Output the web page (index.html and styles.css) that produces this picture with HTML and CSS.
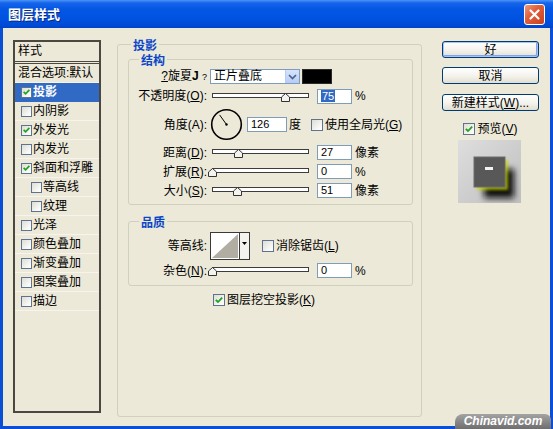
FILE: index.html
```html
<!DOCTYPE html>
<html lang="zh-CN">
<head>
<meta charset="utf-8">
<title>图层样式</title>
<link rel="stylesheet" href="styles.css">
</head>
<body>
<div class="window">
  <div class="titlebar">
    <span class="title">图层样式</span>
    <span class="close"><svg width="19" height="19" viewBox="0 0 19 19"><path d="M5.5 5.5 L13.5 13.5 M13.5 5.5 L5.5 13.5" stroke="#fff" stroke-width="2.2" stroke-linecap="round"/></svg></span>
  </div>
  <div class="client">
    <div class="stylelist">
      <div class="sl-head">样式</div>
      <div class="sl-item plain">混合选项:默认</div>
      <div class="sl-item selected"><span class="cb on"><svg width="10" height="10" viewBox="0 0 10 10"><path d="M1.8 4.8 L4 7 L8.2 2.6" fill="none" stroke="#21a121" stroke-width="1.8"/></svg></span>投影</div>
      <div class="sl-item"><span class="cb"></span>内阴影</div>
      <div class="sl-item"><span class="cb on"><svg width="10" height="10" viewBox="0 0 10 10"><path d="M1.8 4.8 L4 7 L8.2 2.6" fill="none" stroke="#21a121" stroke-width="1.8"/></svg></span>外发光</div>
      <div class="sl-item"><span class="cb"></span>内发光</div>
      <div class="sl-item"><span class="cb on"><svg width="10" height="10" viewBox="0 0 10 10"><path d="M1.8 4.8 L4 7 L8.2 2.6" fill="none" stroke="#21a121" stroke-width="1.8"/></svg></span>斜面和浮雕</div>
      <div class="sl-item sub"><span class="cb"></span>等高线</div>
      <div class="sl-item sub"><span class="cb"></span>纹理</div>
      <div class="sl-item"><span class="cb"></span>光泽</div>
      <div class="sl-item"><span class="cb"></span>颜色叠加</div>
      <div class="sl-item"><span class="cb"></span>渐变叠加</div>
      <div class="sl-item"><span class="cb"></span>图案叠加</div>
      <div class="sl-item"><span class="cb"></span>描边</div>
    </div>

    <fieldset class="group outer">
      <legend>投影</legend>
      <fieldset class="group inner struct">
        <legend>结构</legend>
        <div class="row r19">
          <span class="lbl"><u>?</u>旋夏<b>J</b> <small>?</small></span>
          <span class="select"><span class="sel-text">正片叠底</span><span class="sel-btn"><svg width="9" height="6" viewBox="0 0 9 6"><path d="M1 1 L4.5 4.5 L8 1" fill="none" stroke="#4d6185" stroke-width="1.6"/></svg></span></span>
          <span class="swatch"></span>
        </div>
        <div class="row r20">
          <span class="lbl">不透明度(<u>O</u>):</span>
          <svg class="slider" width="103" height="13" viewBox="0 0 103 13"><rect x="5.5" y="3.5" width="96" height="4" fill="#fff" stroke="#3c3c3c"/><polygon points="78.5,3.5 82.5,7 82.5,11.5 74.5,11.5 74.5,7" fill="#f4f3ee" stroke="#333"/></svg>
          <span class="field"><span class="hl">75</span></span>
          <span class="unit">%</span>
        </div>
        <div class="row angle">
          <span class="lbl">角度(A):</span>
          <svg class="dial" width="33" height="33" viewBox="0 0 33 33"><circle cx="16.5" cy="16.5" r="14.8" fill="none" stroke="#000" stroke-width="1.6"/><line x1="16.5" y1="16.5" x2="9.6" y2="6.9" stroke="#000" stroke-width="1"/><circle cx="16.5" cy="16.5" r="1.2" fill="#000"/></svg>
          <span class="field wide">126</span>
          <span class="unit deg">度</span>
          <span class="cb gl"></span>
          <span class="cblabel">使用全局光(<u>G</u>)</span>
        </div>
        <div class="row r19">
          <span class="lbl">距离(<u>D</u>):</span>
          <svg class="slider" width="103" height="13" viewBox="0 0 103 13"><rect x="5.5" y="3.5" width="96" height="4" fill="#fff" stroke="#3c3c3c"/><polygon points="31.5,3.5 35.5,7 35.5,11.5 27.5,11.5 27.5,7" fill="#f4f3ee" stroke="#333"/></svg>
          <span class="field">27</span>
          <span class="unit">像素</span>
        </div>
        <div class="row r19">
          <span class="lbl">扩展(<u>R</u>):</span>
          <svg class="slider" width="103" height="13" viewBox="0 0 103 13"><rect x="5.5" y="3.5" width="96" height="4" fill="#fff" stroke="#3c3c3c"/><polygon points="5.5,3.5 9.5,7 9.5,11.5 1.5,11.5 1.5,7" fill="#f4f3ee" stroke="#333"/></svg>
          <span class="field">0</span>
          <span class="unit">%</span>
        </div>
        <div class="row r19">
          <span class="lbl">大小(<u>S</u>):</span>
          <svg class="slider" width="103" height="13" viewBox="0 0 103 13"><rect x="5.5" y="3.5" width="96" height="4" fill="#fff" stroke="#3c3c3c"/><polygon points="30.5,3.5 34.5,7 34.5,11.5 26.5,11.5 26.5,7" fill="#f4f3ee" stroke="#333"/></svg>
          <span class="field">51</span>
          <span class="unit">像素</span>
        </div>
      </fieldset>

      <fieldset class="group inner quality">
        <legend>品质</legend>
        <div class="row contour-row">
          <span class="lbl">等高线:</span>
          <span class="contour">
            <svg class="curve" width="30" height="28" viewBox="0 0 30 28"><rect x="0.5" y="0.5" width="29" height="27" fill="#fff" stroke="#3a3a3a"/><polygon points="2,26 28,2 28,26" fill="#b2ada2"/></svg>
            <span class="contour-btn"><svg width="5" height="3" viewBox="0 0 5 3"><polygon points="0,0 5,0 2.5,3" fill="#000"/></svg></span>
          </span>
          <span class="cb aa"></span>
          <span class="cblabel">消除锯齿(<u>L</u>)</span>
        </div>
        <div class="row r19">
          <span class="lbl">杂色(<u>N</u>):</span>
          <svg class="slider" width="103" height="13" viewBox="0 0 103 13"><rect x="5.5" y="3.5" width="96" height="4" fill="#fff" stroke="#3c3c3c"/><polygon points="5.5,3.5 9.5,7 9.5,11.5 1.5,11.5 1.5,7" fill="#f4f3ee" stroke="#333"/></svg>
          <span class="field">0</span>
          <span class="unit">%</span>
        </div>
      </fieldset>

      <div class="row knockout">
        <span class="cb on"><svg width="10" height="10" viewBox="0 0 10 10"><path d="M1.8 4.8 L4 7 L8.2 2.6" fill="none" stroke="#21a121" stroke-width="1.8"/></svg></span>
        <span class="cblabel">图层挖空投影(<u>K</u>)</span>
      </div>
    </fieldset>

    <div class="actions">
      <div class="btn default">好</div>
      <div class="btn">取消</div>
      <div class="btn">新建样式(<u>W</u>)...</div>
      <div class="preview-check">
        <span class="cb on"><svg width="10" height="10" viewBox="0 0 10 10"><path d="M1.8 4.8 L4 7 L8.2 2.6" fill="none" stroke="#21a121" stroke-width="1.8"/></svg></span>
        <span class="cblabel">预览(<u>V</u>)</span>
      </div>
      <svg class="preview" width="63" height="63" viewBox="0 0 63 63">
        <defs>
          <linearGradient id="pbg" x1="0" y1="0" x2="1" y2="1">
            <stop offset="0" stop-color="#dedede"/>
            <stop offset="0.6" stop-color="#cbcbcb"/>
            <stop offset="1" stop-color="#c0c0c0"/>
          </linearGradient>
          <filter id="blur3" x="-50%" y="-50%" width="200%" height="200%"><feGaussianBlur stdDeviation="3"/></filter>
          <filter id="blur2" x="-50%" y="-50%" width="200%" height="200%"><feGaussianBlur stdDeviation="1.4"/></filter>
        </defs>
        <rect x="0" y="0" width="63" height="63" fill="url(#pbg)"/>
        <rect x="26" y="29" width="30" height="29" fill="#0e0e0e" filter="url(#blur3)"/>
        <rect x="19" y="20" width="31" height="30" fill="#c4d400" opacity="0.75" filter="url(#blur2)"/>
        <rect x="16" y="17" width="31" height="30" fill="#585858" stroke="#6c6c6c" stroke-width="1"/>
        <rect x="27" y="27" width="8" height="3" fill="#f2f2f2"/>
      </svg>
    </div>
  </div>
  <div class="watermark">Chinavid.com</div>
</div>
</body>
</html>
```

FILE: styles.css
```css
* { box-sizing: border-box; }
html, body { margin: 0; padding: 0; }
body {
  width: 553px;
  height: 429px;
  overflow: hidden;
  font-family: "Liberation Sans", "Noto Sans CJK SC", sans-serif;
  font-size: 12px;
  color: #000;
  background: #0a4fd6;
}
.window {
  position: relative;
  width: 553px;
  height: 429px;
  display: flex;
  flex-direction: column;
  background: #0a4fd6;
}

/* title bar */
.titlebar {
  flex: none;
  height: 28px;
  display: flex;
  align-items: center;
  justify-content: space-between;
  padding: 0 8px;
  background: linear-gradient(#4a94f8 0px, #1564ea 3px, #0457e4 9px, #0052e0 18px, #004bd6 25px, #0043c8 28px);
}
.title {
  color: #fff;
  font-family: "Noto Sans CJK SC", sans-serif;
  font-weight: bold;
  font-size: 13px;
  line-height: 16px;
  text-shadow: 1px 1px 0 #0a2a80;
}
.close {
  width: 21px;
  height: 21px;
  display: flex;
  align-items: center;
  justify-content: center;
  border: 1px solid #fff;
  border-radius: 3px;
  background: linear-gradient(135deg, #ee9a7c 0%, #e0603c 40%, #c9401f 100%);
}
.close svg { display: block; }

/* client area */
.client {
  flex: 1;
  margin: 0 3px 3px;
  display: flex;
  align-items: flex-start;
  background: #ece9d8;
}

/* style list */
.stylelist {
  flex: none;
  width: 88px;
  height: 373px;
  margin: 12px 0 0 10px;
  border: 2px solid #4a4840;
  display: flex;
  flex-direction: column;
}
.sl-head {
  height: 22px;
  padding-left: 3px;
  line-height: 19px;
  border-bottom: 3px double #4a4840;
}
.sl-item {
  height: 19px;
  display: flex;
  align-items: center;
  padding-left: 6px;
  line-height: 14px;
  border-bottom: 1px solid #f6f4ec;
  white-space: nowrap;
}
.sl-item.plain { padding-left: 3px; }
.sl-item.sub { padding-left: 16px; }
.sl-item.selected {
  background: #316ac5;
  color: #fff;
  font-weight: bold;
  border-bottom-color: #316ac5;
}
.sl-item .cb { width: 11px; height: 11px; margin-right: 1px; }

/* checkboxes */
.cb {
  flex: none;
  display: inline-flex;
  align-items: center;
  justify-content: center;
  width: 12px;
  height: 12px;
  border: 1px solid #5d7391;
  background: linear-gradient(135deg, #dddcd4, #f7f7f4 70%, #fff);
}
.cb svg { display: block; }
.cblabel { margin-left: 2px; white-space: nowrap; line-height: 14px; }

/* group boxes */
.group {
  margin: 0;
  min-width: 0;
  border: 1px solid #d0d0bf;
  border-radius: 3px;
}
.group legend {
  padding: 0 2px;
  font-size: 12px;
  line-height: 13px;
  color: #0b46c8;
  font-weight: bold;
  font-family: "Noto Sans CJK SC", sans-serif;
}
.outer {
  flex: none;
  width: 305px;
  height: 379px;
  margin: 10px 0 0 16px;
  padding: 0 8px 0 10px;
}
.outer > legend { margin-left: 3px; }
.inner {
  width: 100%;
  padding: 0;
}
.inner > legend { margin-left: 10px; }
.struct { margin-top: 2px; padding: 1px 0 4px 0; }
.quality { margin-top: 10px; padding: 2px 0 5px 0; }

/* rows */
.row {
  display: flex;
  align-items: center;
  white-space: nowrap;
  line-height: 14px;
}
.r19 { height: 19px; }
.r20 { height: 20px; }
.angle { height: 37px; }
.contour-row { height: 31px; }
.lbl {
  flex: none;
  width: 78px;
  text-align: right;
  white-space: nowrap;
}
.lbl small { font-size: 9px; }

.select {
  flex: none;
  width: 90px;
  height: 15px;
  margin-left: 3px;
  display: flex;
  border: 1px solid #7f9db9;
  background: #fff;
}
.sel-text {
  flex: 1;
  padding-left: 3px;
  font-size: 12px;
  line-height: 13px;
}
.sel-btn {
  width: 14px;
  display: flex;
  align-items: center;
  justify-content: center;
  background: linear-gradient(#d6e3fd, #b6cdf6);
  border-left: 1px solid #b9cbee;
}
.sel-btn svg { display: block; }
.swatch {
  flex: none;
  width: 30px;
  height: 15px;
  margin-left: 2px;
  background: #000;
  border: 1px solid #2a2a2a;
}

.slider { flex: none; display: block; }
.dial { flex: none; display: block; margin-left: 3px; }

.field {
  flex: none;
  width: 35px;
  height: 15px;
  margin-left: 7px;
  padding-left: 3px;
  border: 1px solid #7f9db9;
  background: #fff;
  font-size: 11px;
  line-height: 13px;
}
.field.wide { width: 40px; margin-left: 4px; }
.hl { background: #316ac5; color: #fff; padding: 0 1px; }
.unit { margin-left: 3px; font-size: 12px; }
.unit.deg { margin-left: 2px; }
.cb.gl { margin-left: 10px; }

.contour {
  flex: none;
  display: flex;
  margin-left: 3px;
}
.curve { display: block; }
.contour-btn {
  width: 10px;
  height: 28px;
  display: flex;
  justify-content: center;
  padding-top: 9px;
  border: 1px solid #3a3a3a;
  border-left: none;
  background: #f4f3ee;
}
.contour-btn svg { display: block; }
.cb.aa { margin-left: 12px; }

.knockout {
  height: 19px;
  margin-top: 4px;
  padding-left: 85px;
}

/* action column */
.actions {
  flex: none;
  width: 97px;
  margin: 13px 0 0 20px;
  display: flex;
  flex-direction: column;
}
.btn {
  height: 17px;
  display: flex;
  align-items: center;
  justify-content: center;
  border: 1px solid #003c74;
  border-radius: 3px;
  background: linear-gradient(#ffffff, #f3f2ec 55%, #e2ded0);
  line-height: 14px;
  white-space: nowrap;
}
.btn + .btn { margin-top: 9px; }
.btn + .btn + .btn { margin-top: 10px; }
.btn.default { box-shadow: inset 0 0 0 1px #a9c4f3, inset -1px -1px 0 1px #7fa4e8; }
.preview-check {
  display: flex;
  align-items: center;
  justify-content: center;
  margin-top: 11px;
  height: 13px;
}
.preview {
  display: block;
  margin: 5px 0 0 16px;
}

/* watermark */
.watermark {
  position: absolute;
  right: 2px;
  bottom: 0;
  width: 96px;
  height: 15px;
  border-radius: 8px 6px 0 0;
  background: linear-gradient(#a3a3a3, #6e6e6e);
  color: #fff;
  font-family: "Liberation Sans", sans-serif;
  font-weight: bold;
  font-style: italic;
  font-size: 12px;
  line-height: 15px;
  text-align: center;
}
```
